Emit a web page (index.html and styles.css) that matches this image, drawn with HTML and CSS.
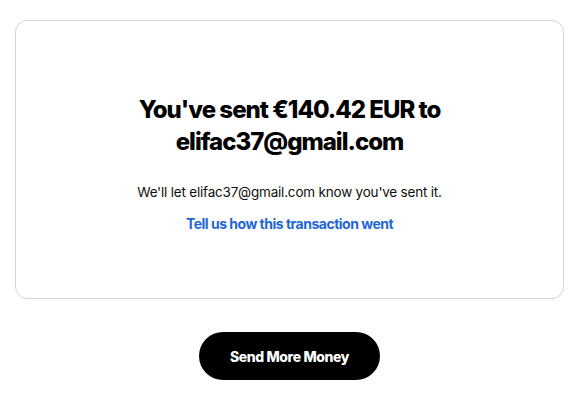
FILE: index.html
```html
<!DOCTYPE html>
<html lang="en">
  <head>
    <meta charset="UTF-8" />
    <meta name="viewport" content="width=device-width, initial-scale=1" />
    <title>Transfer sent</title>
    <link rel="stylesheet" href="styles.css">
  </head>
  <body>
    <main class="page">
      <section class="result-card">
        <h1 class="result-title">You've sent €140.42 EUR to elifac37@gmail.com</h1>
        <p class="result-note">We'll let elifac37@gmail.com know you've sent it.</p>
        <a href="#" class="result-link">Tell us how this transaction went</a>
      </section>
      <button class="send-more">Send More Money</button>
    </main>
  </body>
</html>
```

FILE: styles.css
```css
* {
  margin: 0;
  padding: 0;
  box-sizing: border-box;
}
body {
  background: #fff;
  color: #0e0f0c;
  font-family: Inter, "Noto Sans", sans-serif;
}
a {
  text-decoration: none;
}

.page {
  padding: 20px 11px 0 15px;
  display: flex;
  flex-direction: column;
  align-items: center;
}

/* Card */
.result-card {
  width: 100%;
  height: 279px;
  border: 1px solid #d4d4d4;
  border-radius: 12px;
  padding: 73px 24px 0;
  display: flex;
  flex-direction: column;
  align-items: center;
  text-align: center;
}
.result-title {
  max-width: 320px;
  font-size: 24px;
  line-height: 32px;
  font-weight: 800;
  letter-spacing: -1px;
  color: #000;
}
.result-note {
  margin-top: 24px;
  font-size: 13.5px;
  line-height: 20px;
  letter-spacing: -0.2px;
  color: #0e0f0c;
}
.result-link {
  margin-top: 12px;
  font-size: 14px;
  line-height: 20px;
  font-weight: 700;
  letter-spacing: -0.5px;
  color: #1f66d6;
}

/* Button */
.send-more {
  margin-top: 33px;
  width: 181px;
  height: 48px;
  border: none;
  border-radius: 24px;
  background: #000;
  color: #fff;
  font-family: Inter, "Noto Sans", sans-serif;
  font-size: 14px;
  font-weight: 800;
  letter-spacing: -0.4px;
  cursor: pointer;
}
```
